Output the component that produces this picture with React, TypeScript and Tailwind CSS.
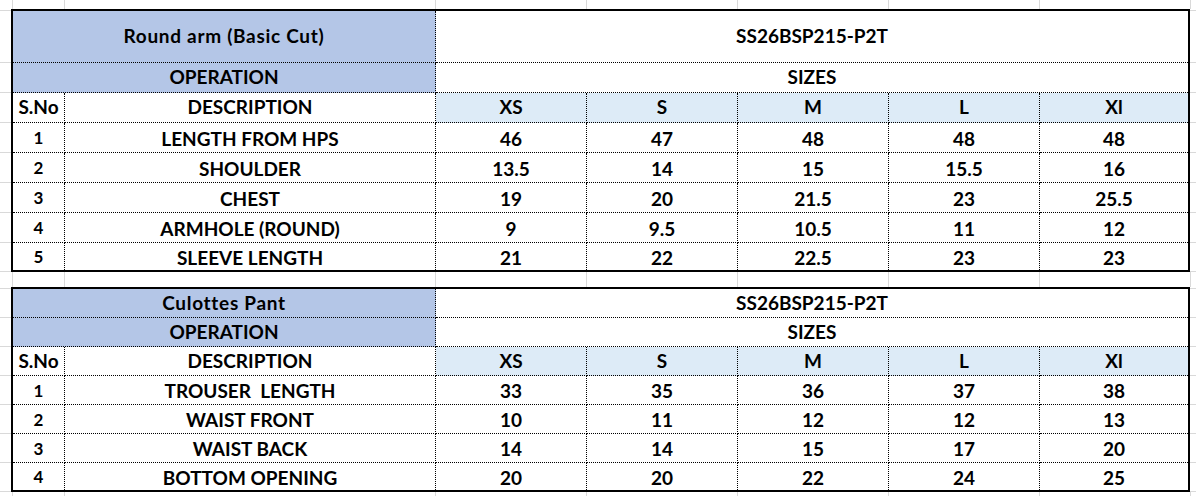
import React from "react";

type Row = { no: string; desc: string; vals: string[] };

const SIZE_W = ["w-[151px]", "w-[151px]", "w-[151px]", "w-[151px]", "w-[148px]"];
const SIZES = ["XS", "S", "M", "L", "Xl"];

function Strip({ h }: { h: string }) {
  return (
    <div className={`flex ${h}`}>
      <div className="w-[13px] border-r border-[#d9d9d9]" />
      <div className="w-[52px] border-r border-[#d9d9d9]" />
      <div className="w-[371px] border-r border-[#d9d9d9]" />
      <div className="w-[151px] border-r border-[#d9d9d9]" />
      <div className="w-[151px] border-r border-[#d9d9d9]" />
      <div className="w-[151px] border-r border-[#d9d9d9]" />
      <div className="w-[151px] border-r border-[#d9d9d9]" />
      <div className="w-[151px] border-r border-[#d9d9d9]" />
      <div className="flex-1" />
    </div>
  );
}

function Gutter({ heights, w }: { heights: string[]; w: string }) {
  return (
    <div className={`flex flex-col ${w}`}>
      {heights.map((h, i) => (
        <div key={i} className={`${h} border-b border-[#d9d9d9]`} />
      ))}
    </div>
  );
}

function Cell({
  w,
  children,
  right = true,
  bottom = true,
  bg = "",
  extra = "",
}: {
  w: string;
  children?: React.ReactNode;
  right?: boolean;
  bottom?: boolean;
  bg?: string;
  extra?: string;
}) {
  return (
    <div
      className={`${w} ${bg} ${extra} flex items-center justify-center whitespace-pre border-dotted border-black ${
        right ? "border-r" : ""
      } ${bottom ? "border-b" : ""}`}
    >
      {children}
    </div>
  );
}

function Table({
  title,
  code,
  rows,
  hTitle,
  hOp,
  hHead,
  hData,
}: {
  title: string;
  code: string;
  rows: Row[];
  hTitle: string;
  hOp: string;
  hHead: string;
  hData: string[];
}) {
  return (
    <div className="w-[1179px] border-2 border-black flex flex-col">
      <div className={`flex ${hTitle}`}>
        <Cell w="w-[423px]" bg="bg-[#b4c6e7]" extra="tracking-[0.7px]">
          {title}
        </Cell>
        <Cell w="flex-1" right={false}>
          {code}
        </Cell>
      </div>
      <div className={`flex ${hOp}`}>
        <Cell w="w-[423px]" bg="bg-[#b4c6e7]">
          OPERATION
        </Cell>
        <Cell w="flex-1" right={false}>
          SIZES
        </Cell>
      </div>
      <div className={`flex ${hHead}`}>
        <Cell w="w-[52px]">S.No</Cell>
        <Cell w="w-[371px]">DESCRIPTION</Cell>
        {SIZES.map((s, i) => (
          <Cell key={s} w={SIZE_W[i]} bg="bg-[#ddebf7]" right={i < 4}>
            {s}
          </Cell>
        ))}
      </div>
      {rows.map((r, ri) => {
        const last = ri === rows.length - 1;
        return (
          <div key={ri} className={`flex ${hData[ri]}`}>
            <Cell w="w-[52px]" bottom={!last} extra="pt-[1px] text-[17px]">
              {r.no}
            </Cell>
            <Cell w="w-[371px]" bottom={!last} extra="pt-[3px]">
              {r.desc}
            </Cell>
            {r.vals.map((v, i) => (
              <Cell key={i} w={SIZE_W[i]} right={i < 4} bottom={!last} extra="pt-[3px]">
                {v}
              </Cell>
            ))}
          </div>
        );
      })}
    </div>
  );
}

const top: Row[] = [
  { no: "1", desc: "LENGTH FROM HPS", vals: ["46", "47", "48", "48", "48"] },
  { no: "2", desc: "SHOULDER", vals: ["13.5", "14", "15", "15.5", "16"] },
  { no: "3", desc: "CHEST", vals: ["19", "20", "21.5", "23", "25.5"] },
  { no: "4", desc: "ARMHOLE (ROUND)", vals: ["9", "9.5", "10.5", "11", "12"] },
  { no: "5", desc: "SLEEVE LENGTH", vals: ["21", "22", "22.5", "23", "23"] },
];

const bottom: Row[] = [
  { no: "1", desc: "TROUSER  LENGTH", vals: ["33", "35", "36", "37", "38"] },
  { no: "2", desc: "WAIST FRONT", vals: ["10", "11", "12", "12", "13"] },
  { no: "3", desc: "WAIST BACK", vals: ["14", "14", "15", "17", "20"] },
  { no: "4", desc: "BOTTOM OPENING", vals: ["20", "20", "22", "24", "25"] },
];

const g1 = [
  "h-[2px]",
  "h-[52px]",
  "h-[30px]",
  "h-[30px]",
  "h-[30px]",
  "h-[30px]",
  "h-[30px]",
  "h-[30px]",
  "h-[29px]",
];
const g2 = [
  "h-[2px]",
  "h-[29px]",
  "h-[29px]",
  "h-[29px]",
  "h-[29px]",
  "h-[29px]",
  "h-[29px]",
  "h-[29px]",
];

export default function App() {
  return (
    <div className="w-[1196px] h-[496px] overflow-hidden bg-white text-black font-bold text-[19px] font-['Lato','Carlito',sans-serif] flex flex-col">
      <Strip h="h-[9px]" />
      <div className="flex">
        <Gutter heights={g1} w="w-[11px]" />
        <Table
          title="Round arm (Basic Cut)"
          code="SS26BSP215-P2T"
          rows={top}
          hTitle="h-[52px]"
          hOp="h-[30px]"
          hHead="h-[30px]"
          hData={["h-[30px]", "h-[30px]", "h-[30px]", "h-[30px]", "h-[27px]"]}
        />
        <Gutter heights={g1} w="flex-1" />
      </div>
      <Strip h="h-[15px]" />
      <div className="flex">
        <Gutter heights={g2} w="w-[11px]" />
        <Table
          title="Culottes Pant"
          code="SS26BSP215-P2T"
          rows={bottom}
          hTitle="h-[29px]"
          hOp="h-[29px]"
          hHead="h-[29px]"
          hData={["h-[29px]", "h-[29px]", "h-[29px]", "h-[27px]"]}
        />
        <Gutter heights={g2} w="flex-1" />
      </div>
      <Strip h="h-[4px]" />
    </div>
  );
}
